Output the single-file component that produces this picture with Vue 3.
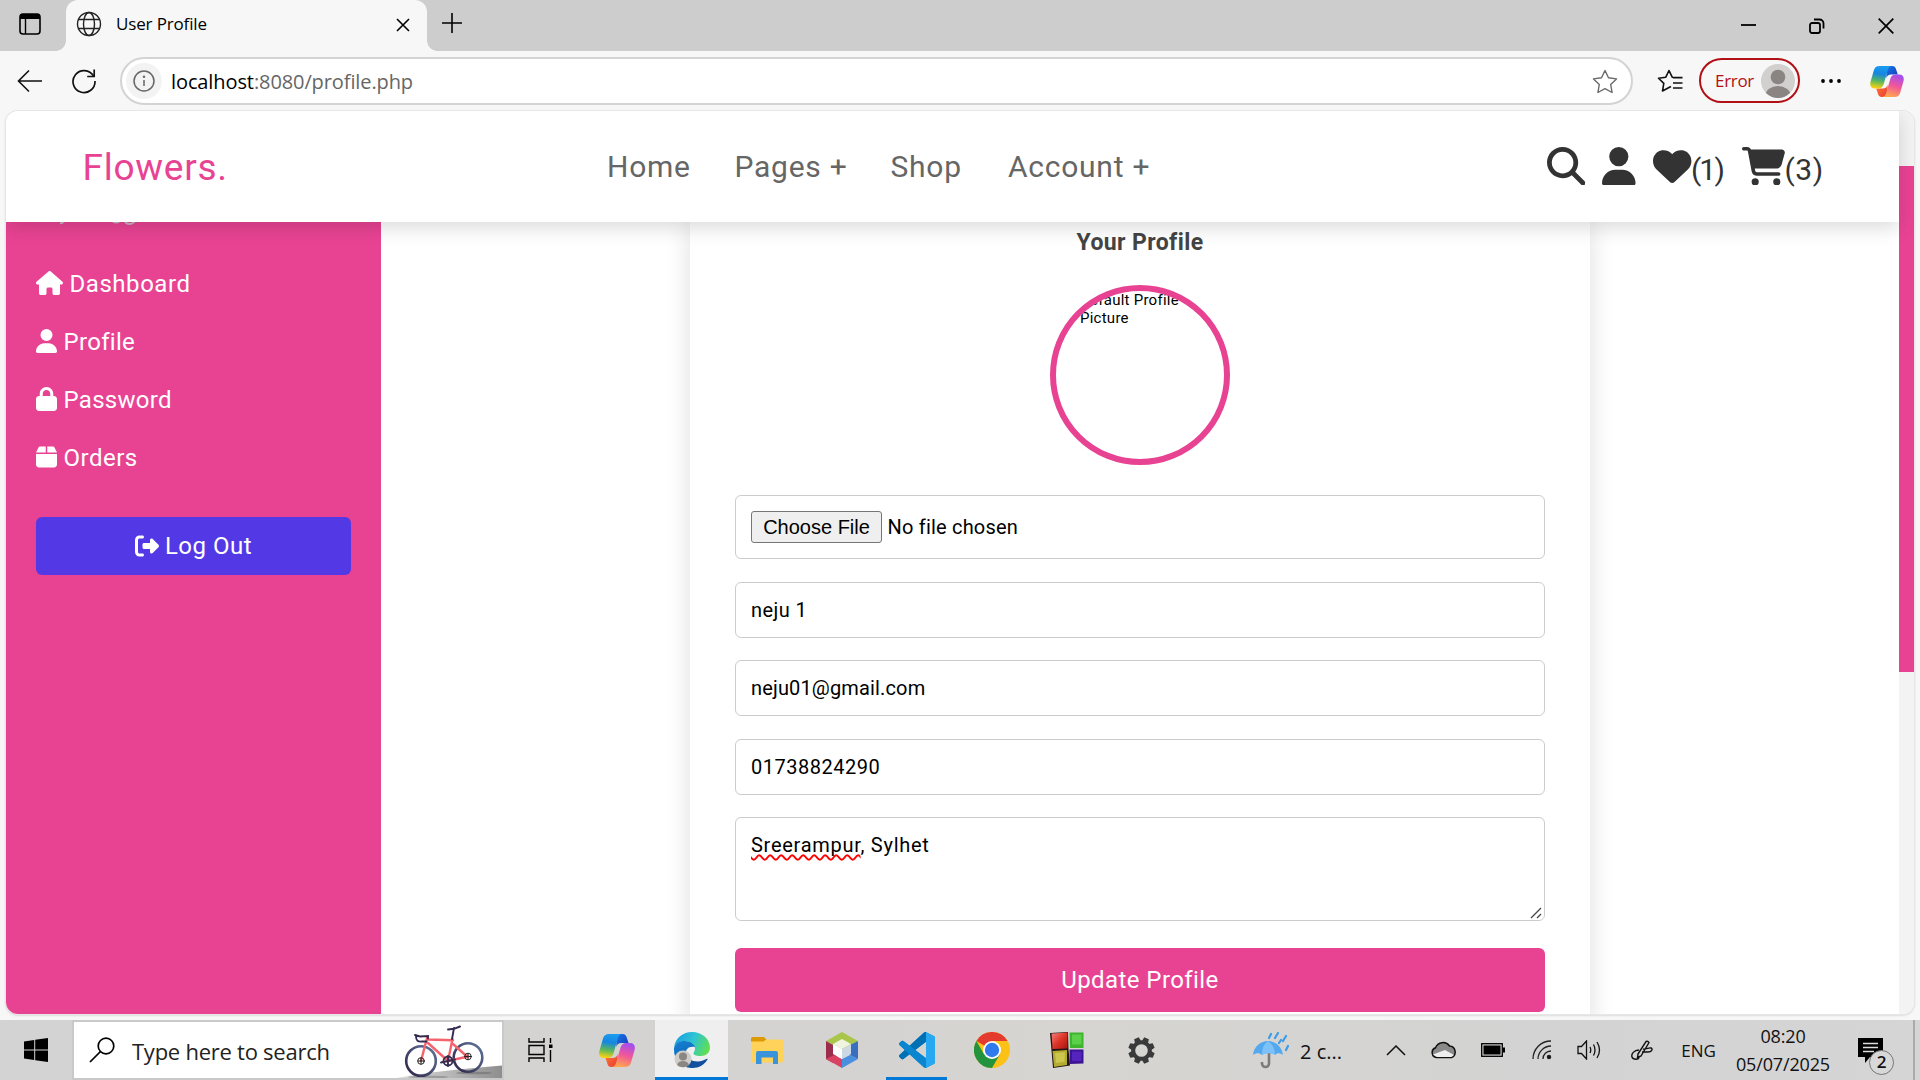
<script setup>
const glyphs = {
  search: { w: 512, d: 'M416 208c0 45.9-14.9 88.3-40 122.7L502.6 457.4c12.5 12.5 12.5 32.8 0 45.3s-32.8 12.5-45.3 0L330.7 376c-34.4 25.2-76.8 40-122.7 40C93.1 416 0 322.9 0 208S93.1 0 208 0S416 93.1 416 208zM208 352a144 144 0 1 0 0-288 144 144 0 1 0 0 288z' },
  user: { w: 448, d: 'M224 256A128 128 0 1 0 224 0a128 128 0 1 0 0 256zm-45.7 48C79.8 304 0 383.8 0 482.3C0 498.7 13.3 512 29.7 512H418.3c16.4 0 29.7-13.3 29.7-29.7C448 383.8 368.2 304 269.7 304H178.3z' },
  heart: { w: 512, d: 'M47.6 300.4L228.3 469.1c7.5 7 17.4 10.9 27.7 10.9s20.2-3.9 27.7-10.9L464.4 300.4c30.4-28.3 47.6-68 47.6-109.5v-5.8c0-69.9-50.5-129.5-119.4-141C347 36.5 300.6 51.4 268 84L256 96 244 84c-32.6-32.6-79-47.5-124.6-39.9C50.5 55.6 0 115.2 0 185.1v5.8c0 41.5 17.2 81.2 47.6 109.5z' },
  cart: { w: 576, d: 'M0 24C0 10.7 10.7 0 24 0H69.5c22 0 41.5 12.8 50.6 32h411c26.3 0 45.5 25 38.6 50.4l-41 152.3c-8.5 31.4-37 53.3-69.5 53.3H170.7l5.4 28.5c2.2 11.3 12.1 19.5 23.6 19.5H488c13.3 0 24 10.7 24 24s-10.7 24-24 24H199.7c-34.6 0-64.3-24.6-70.7-58.5L77.4 54.5c-.7-3.8-4-6.5-7.9-6.5H24C10.7 48 0 37.3 0 24zM128 464a48 48 0 1 1 96 0 48 48 0 1 1 -96 0zm336-48a48 48 0 1 1 0 96 48 48 0 1 1 0-96z' },
  house: { w: 576, d: 'M575.8 255.5c0 18-15 32.1-32 32.1h-32l.7 160.2c0 2.7-.2 5.4-.5 8.1V472c0 22.1-17.9 40-40 40H456c-1.1 0-2.2 0-3.3-.1c-1.4 .1-2.8 .1-4.2 .1H416 392c-22.1 0-40-17.9-40-40V448 384c0-17.7-14.3-32-32-32H256c-17.7 0-32 14.3-32 32v64 24c0 22.1-17.9 40-40 40H160 128.1c-1.5 0-3-.1-4.5-.2c-1.2 .1-2.4 .2-3.6 .2H104c-22.1 0-40-17.9-40-40V360c0-.9 0-1.9 .1-2.8V287.6H32c-18 0-32-14-32-32.1c0-9 3-17 10-24L266.4 8c7-7 15-8 22-8s15 2 21 7L564.8 231.5c8 7 12 15 11 24z' },
  lock: { w: 448, d: 'M144 144v48H304V144c0-44.2-35.8-80-80-80s-80 35.8-80 80zM80 192V144C80 64.5 144.5 0 224 0s144 64.5 144 144v48h16c35.3 0 64 28.7 64 64V448c0 35.3-28.7 64-64 64H64c-35.3 0-64-28.7-64-64V256c0-35.3 28.7-64 64-64H80z' },
  box: { w: 448, d: 'M50.7 58.5L0 160H208V32H93.7C75.5 32 58.9 42.3 50.7 58.5zM240 160H448L397.3 58.5C389.1 42.3 372.5 32 354.3 32H240V160zm208 32H0V416c0 35.3 28.7 64 64 64H384c35.3 0 64-28.7 64-64V192z' },
  logout: { w: 512, d: 'M377.9 105.9L500.7 228.7c7.2 7.2 11.3 17.1 11.3 27.3s-4.1 20.1-11.3 27.3L377.9 406.1c-6.4 6.4-15 9.9-24 9.9c-18.7 0-33.9-15.2-33.9-33.9l0-62.1-128 0c-17.7 0-32-14.3-32-32l0-64c0-17.7 14.3-32 32-32l128 0 0-62.1c0-18.7 15.2-33.9 33.9-33.9c9 0 17.6 3.6 24 9.9zM160 96L96 96c-17.7 0-32 14.3-32 32l0 256c0 17.7 14.3 32 32 32l64 0c17.7 0 32 14.3 32 32s-14.3 32-32 32l-64 0c-53 0-96-43-96-96L0 128C0 75 43 32 96 32l64 0c17.7 0 32 14.3 32 32s-14.3 32-32 32z' },
}
const menu = [
  { id: 'dashboard', icon: 'house', label: 'Dashboard' },
  { id: 'profile', icon: 'user', label: 'Profile' },
  { id: 'password', icon: 'lock', label: 'Password' },
  { id: 'orders', icon: 'box', label: 'Orders' },
]
const nav = ['Home', 'Pages +', 'Shop', 'Account +']
const fields = [
  { id: 'name', value: 'neju 1' },
  { id: 'email', value: 'neju01@gmail.com' },
  { id: 'phone', value: '01738824290' },
]
</script>

<template>
  <div class="screen">
    <svg class="defs" width="0" height="0">
      <defs>
        <linearGradient id="cpA" x1=".5" y1="0" x2=".35" y2="1"><stop offset="0" stop-color="#1b9cf0" /><stop offset=".35" stop-color="#1586e0" /><stop offset=".68" stop-color="#5cb85a" /><stop offset="1" stop-color="#ffd30f" /></linearGradient>
        <linearGradient id="cpB" x1=".7" y1="0" x2=".4" y2="1"><stop offset="0" stop-color="#a04ef2" /><stop offset=".5" stop-color="#f0569a" /><stop offset="1" stop-color="#ffa64d" /></linearGradient>
        <linearGradient id="cpC" x1="0" y1="0" x2="1" y2="1"><stop offset="0" stop-color="#1678e8" /><stop offset="1" stop-color="#1838b8" /></linearGradient>
        <linearGradient id="cpD" x1="0" y1="0" x2="1" y2="1"><stop offset="0" stop-color="#ff7a2c" /><stop offset="1" stop-color="#e8383c" /></linearGradient>
        <symbol id="copilot" viewBox="0 0 36 33">
          <path d="M18 0h5.500c2.600 0 3.500 1.300 4.200 3.600L29.500 9h-7c-3 0-4.500 1.500-5.300 4z" fill="url(#cpC)" />
          <path d="M18 33h-5.500c-2.600 0-3.500-1.300-4.200-3.600L6.500 24h7c3 0 4.500-1.500 5.300-4z" fill="url(#cpD)" />
          <path d="M10 0h13.200c-2.400 0-3.600 1.600-4.400 4.400L14.600 19c-1 3.400-2.600 5-6 5H5c-4 0-5.600-3-4.600-7L4 4.500C4.800 1.500 6.800 0 10 0z" fill="url(#cpA)" />
          <path d="M26 33H12.800c2.400 0 3.600-1.600 4.400-4.400L21.400 14c1-3.400 2.600-5 6-5H31c4 0 5.600 3 4.600 7L32 28.500c-.8 3-2.800 4.500-6 4.500z" fill="url(#cpB)" />
        </symbol>
        <linearGradient id="edA" x1="0" y1=".3" x2="1" y2=".6"><stop offset="0" stop-color="#1a9fe0" /><stop offset=".5" stop-color="#2ec4d4" /><stop offset="1" stop-color="#62e04c" /></linearGradient>
        <linearGradient id="edB" x1="0" y1="0" x2=".3" y2="1"><stop offset="0" stop-color="#1582d4" /><stop offset="1" stop-color="#0c5fb0" /></linearGradient>
        <linearGradient id="hill" x1="0" y1="0" x2="1" y2="0"><stop offset="0" stop-color="#e8e8e8" /><stop offset="1" stop-color="#8e8e8e" /></linearGradient>
        <linearGradient id="wheel" x1="0" y1="1" x2="1" y2="0"><stop offset="0" stop-color="#2c2346" /><stop offset="1" stop-color="#61759c" /></linearGradient>
        <linearGradient id="redTile" x1="0" y1="0" x2="1" y2="1"><stop offset="0" stop-color="#f4827a" /><stop offset=".5" stop-color="#dc3428" /><stop offset="1" stop-color="#a81410" /></linearGradient>
      </defs>
    </svg>

    <div class="tabstrip">
      <svg class="workspaces" width="22" height="22" viewBox="0 0 22 22"><rect x="1" y="1" width="20" height="20" rx="3" fill="none" stroke="#000" stroke-width="1.600" /><path d="M1 6V4a3 3 0 0 1 3-3h14a3 3 0 0 1 3 3v2z" fill="#000" /><path d="M6.500 6v15" stroke="#000" stroke-width="1.400" /></svg>
      <div class="tab">
        <svg width="26" height="26" viewBox="0 0 26 26" fill="none" stroke="#222" stroke-width="1.400"><circle cx="13" cy="13" r="11.500" /><ellipse cx="13" cy="13" rx="5.500" ry="11.500" /><path d="M2.500 8.500h21M2.500 17.500h21" /></svg>
        <span class="tab-title">User Profile</span>
        <svg class="tab-close" width="14" height="14" viewBox="0 0 14 14" stroke="#000" stroke-width="1.600"><path d="M1 1l12 12M13 1L1 13" /></svg>
      </div>
      <svg class="new-tab" width="22" height="22" viewBox="0 0 22 22" stroke="#000" stroke-width="1.600"><path d="M11 1v20M1 11h20" /></svg>
      <div class="win-controls">
        <svg width="15" height="15" viewBox="0 0 15 15"><path d="M0 7h15" stroke="#000" stroke-width="1.800" /></svg>
        <svg width="16" height="16" viewBox="0 0 16 16" fill="none" stroke="#000" stroke-width="1.800"><rect x="1" y="5" width="10" height="10" rx="2" /><path d="M5 1.500h5.500a4 4 0 0 1 4 4v5" /></svg>
        <svg width="16" height="16" viewBox="0 0 16 16" stroke="#000" stroke-width="1.700"><path d="M.7.700l14.600 14.600M15.300.7L.7 15.300" /></svg>
      </div>
    </div>

    <div class="toolbar">
      <svg class="back" width="26" height="24" viewBox="0 0 26 24" fill="none" stroke="#111" stroke-width="1.600"><path d="M25 12H1.500M12 1.500L1.500 12 12 22.500" /></svg>
      <svg class="reload" width="26" height="26" viewBox="0 0 26 26" fill="none" stroke="#111" stroke-width="1.700"><path d="M22.500 8A11 11 0 1 0 24 13" /><path d="M23.200 1.500v7h-7" /></svg>
      <div class="address">
        <span class="site-info"><svg width="22" height="22" viewBox="0 0 22 22" fill="none" stroke="#666" stroke-width="1.500"><circle cx="11" cy="11" r="10" /><path d="M11 10v6" /><circle cx="11" cy="6.700" r=".5" /></svg></span>
        <span class="url"><b>localhost</b>:8080/profile.php</span>
        <svg class="star" width="26" height="25" viewBox="0 0 26 25" fill="none" stroke="#6a6a6a" stroke-width="1.400" stroke-linejoin="round"><path d="M13 1.500l3.500 7.300 8 1.100-5.800 5.600 1.400 8L13 19.700l-7.100 3.800 1.400-8L1.500 9.900l8-1.100z" /></svg>
      </div>
      <svg class="favs" width="26" height="25" viewBox="0 0 26 25" fill="none" stroke="#111" stroke-width="1.600" stroke-linejoin="round"><path d="M18 8.600l-2.800-.4L12 1.500 8.800 8.200l-7.300 1 5.300 5.200L5.500 22l6.500-3.500 2-1M16 8.600h9.500M16 14h9.500M16 19h9.500" /></svg>
      <div class="account"><span>Error</span><svg width="34" height="34" viewBox="0 0 34 34"><defs><clipPath id="av"><circle cx="17" cy="17" r="17" /></clipPath></defs><circle cx="17" cy="17" r="17" fill="#d2d0ce" /><g fill="#8a8583" clip-path="url(#av)"><circle cx="17" cy="13" r="7.300" /><ellipse cx="17" cy="31" rx="12.500" ry="9" /></g></svg></div>
      <svg class="dots" width="22" height="6" viewBox="0 0 22 6"><circle cx="3" cy="3" r="1.900" /><circle cx="11" cy="3" r="1.900" /><circle cx="19" cy="3" r="1.900" /></svg>
      <svg class="copilot" width="34" height="31"><use href="#copilot" /></svg>
    </div>

    <div class="viewport">
      <div class="page">
        <header class="header">
          <span class="logo">Flowers.</span>
          <nav class="nav"><span v-for="n in nav" :key="n">{{ n }}</span></nav>
          <div class="actions">
            <svg width="38.400" height="38.400" viewBox="0 0 512 512"><path :d="glyphs.search.d" /></svg>
            <svg class="act-user" width="33.600" height="38.400" viewBox="0 0 448 512"><path :d="glyphs.user.d" /></svg>
            <svg class="act-heart" width="38.400" height="38.400" viewBox="0 0 512 512"><path :d="glyphs.heart.d" /></svg>
            <span class="count one">(1)</span>
            <svg width="43.200" height="38.400" viewBox="0 0 576 512"><path :d="glyphs.cart.d" /></svg>
            <span class="count">(3)</span>
          </div>
        </header>
        <div class="body">
          <aside class="sidebar">
            <svg class="cutoff" width="90" height="4" viewBox="0 0 90 4" fill="none" stroke="#c4b4bc" stroke-width="2"><path d="M18 1.300q2.500 0 4-2M71-.5q3 2.200 6.500 0M83 0q4 4 9.500 0" /></svg>
            <a v-for="m in menu" :key="m.id" class="link" :class="m.id">
              <svg :width="glyphs[m.icon].w / 512 * 24" height="24" :viewBox="`0 0 ${glyphs[m.icon].w} 512`"><path :d="glyphs[m.icon].d" /></svg>
              <span>{{ m.label }}</span>
            </a>
            <a class="logout"><svg width="24" height="24" viewBox="0 0 512 512"><path :d="glyphs.logout.d" /></svg><span>Log Out</span></a>
          </aside>
          <main class="main">
            <section class="card">
              <h2>Your Profile</h2>
              <div class="photo">Default Profile<br>Picture</div>
              <div class="field file"><span class="choose">Choose File</span><span class="nofile">No file chosen</span></div>
              <div v-for="f in fields" :key="f.id" class="field" :class="f.id">{{ f.value }}</div>
              <div class="field address-box"><span><span class="misspelt">Sreerampur</span>, Sylhet</span>
                <svg class="grip" width="12" height="12" viewBox="0 0 12 12" stroke="#444" stroke-width="1.300"><path d="M1 11L11 1M7 11l4-4" /></svg>
              </div>
              <div class="update">Update Profile</div>
            </section>
          </main>
        </div>
      </div>
      <div class="scrollbar"><div class="thumb"></div></div>
    </div>

    <div class="taskbar">
      <div class="start"><svg width="24" height="24" viewBox="0 0 24 24"><path d="M0 3.400l10.200-1.400v9.500H0zM11.200 1.800L24 0v11.500H11.200zM0 12.500h10.200V22L0 20.600zM11.200 12.500H24V24l-12.800-1.800z" /></svg></div>
      <div class="search">
        <svg width="26" height="26" viewBox="0 0 26 26" fill="none" stroke="#000" stroke-width="1.700"><circle cx="17" cy="9" r="7.800" /><path d="M11.500 14.500L1 25" /></svg>
        <span>Type here to search</span>
        <svg class="bike" width="112" height="56" viewBox="0 2 112 56" fill="none" stroke-linecap="round">
          <path d="M-4 60C30 53 70 49 112 45.500V60z" fill="url(#hill)" />
          <ellipse cx="38" cy="57" rx="20" ry="1.500" fill="#777" opacity=".5" />
          <ellipse cx="84" cy="53" rx="18" ry="1.300" fill="#666" opacity=".5" />
          <circle cx="31" cy="41" r="14.800" stroke="url(#wheel)" stroke-width="2.600" />
          <circle cx="78" cy="37.500" r="14.300" stroke="url(#wheel)" stroke-width="2.600" />
          <g stroke="#f5636d" stroke-width="2.400"><path d="M37 18l-6 23M38 19.500l25 .8M38 23l20 18M62.500 19L58 41l20-4.500M63 24l14 12.500" /></g>
          <g stroke="#352b50" stroke-width="1.900"><path d="M62 19l2-11M58 9.500l6-.7 6-2.300M38 18.500V16l-8 .5-5-1.500M26 16c0 5 2 6 6 5.500h4.500" /><circle cx="58" cy="41" r="4.500" /><path d="M51 42.500l14-3M58 36v10" /></g>
          <g stroke="#222" stroke-width="1"><circle cx="31" cy="41" r="3.300" /><path d="M31 38v6M28 41h6" /><circle cx="78" cy="36.500" r="3.300" /><path d="M78 33.500v6M75 36.500h6" /></g>
        </svg>
      </div>
      <div class="slot taskview"><svg width="25" height="24" viewBox="0 0 25 24" fill="none" stroke="#000" stroke-width="1.400"><path d="M1 0v4h15V0M1 24v-4h15v4M1 7.500h15v9H1zM22.500 0v5M22.500 12v12" /><path d="M21 6.500h3.500v3.500H21z" fill="#000" stroke="none" /></svg></div>
      <div class="slot"><svg width="36" height="33"><use href="#copilot" /></svg></div>
      <div class="slot"><div class="active">
        <svg width="36" height="36" viewBox="0 0 36 36">
          <path d="M0 16C1 6 9 0 18 0c10 0 18 7 18 15.500 0 5-4 8.500-9.500 8.500-5 0-7.500-1.600-7-3 .8-1.500 1.500-2.500 1.500-4.500C21 12 16 9 10 9 5.500 9 1.500 12 0 16z" fill="url(#edA)" />
          <path d="M0 16C1.500 11 6 8.500 11 9c5 .3 9 2.500 10 6-7-1.500-10 3-9 8 1 5 5 9 10 9.500L19 36C8 36.500 0 28 0 18z" fill="url(#edB)" />
          <path d="M12 21c1 5 5.500 8.500 11.500 8.500 4 0 7.500-1.800 9.300-2.800.5-.2 1 .3.700.8C30.500 32.500 25 36 18.500 36 12 35 8.500 27 12 21z" fill="#124f9e" />
          <circle cx="9" cy="27" r="8.500" fill="#cfcdca" /><circle cx="9" cy="24.500" r="4" fill="#8c8682" /><path d="M3 33c1-3 3-4 6-4s5 1 6 4c-3.500 3-8.500 3-12 0z" fill="#8c8682" />
        </svg></div></div>
      <div class="slot"><svg width="32" height="27" viewBox="0 0 32 27"><path d="M0 1.500A1.500 1.500 0 0 1 1.500 0H13l2.500 2.500L13 5H0z" fill="#dd9a04" /><path d="M0 4.500h12.500L15 2.500h15.500A1.500 1.500 0 0 1 32 4v20a1.500 1.500 0 0 1-1.500 1.500h-29A1.500 1.500 0 0 1 0 24z" fill="#ffd25a" /><path d="M5 27V16a2 2 0 0 1 2-2h18a2 2 0 0 1 2 2v11h-5v-6.500H10.500V27z" fill="#3b93dc" /></svg></div>
      <div class="slot"><svg width="32" height="36" viewBox="0 0 32 36"><path d="M16 0l16 9-16 9L0 9z" fill="#a9c64a" /><path d="M0 9l16 9-9 13L0 27z" fill="#9a2d4c" /><path d="M0 27l8-4 8 4v9z" fill="#da4263" /><path d="M32 27l-8-4-8 4v9z" fill="#4a8fe0" /><path d="M32 9l-8 4v10l8 4z" fill="#3a6fc0" /><path d="M16 7l9 5-9 5-9-5z" fill="#f0f3e0" /><path d="M7 12l9 5v10l-9-5z" fill="#fff" /><path d="M25 12l-9 5v10l9-5z" fill="#ccd8e4" /></svg></div>
      <div class="slot running"><svg width="36" height="36" viewBox="0 0 24 24"><path d="M23.150 2.587L18.210.210a1.494 1.494 0 0 0-1.705.290l-9.460 8.630-4.120-3.128a.999.999 0 0 0-1.276.057L.327 7.261A1 1 0 0 0 .326 8.740L3.899 12 .326 15.260a1 1 0 0 0 .001 1.479L1.650 17.940a.999.999 0 0 0 1.276.057l4.120-3.128 9.460 8.630a1.492 1.492 0 0 0 1.704.290l4.942-2.377A1.500 1.500 0 0 0 24 20.060V3.939a1.500 1.500 0 0 0-.850-1.352zm-5.146 14.861L10.826 12l7.178-5.448v10.896z" fill="#0a86d0" /><path d="M7.045 9.130L3.900 12 .326 15.260a1 1 0 0 0 .001 1.479L1.650 17.940a1 1 0 0 0 1.276.057L10.826 12 18.004 6.552V.120a1.500 1.500 0 0 0-1.500.380z" fill="#0070b5" /><path d="M.327 7.261A1 1 0 0 0 .326 8.740L16.500 23.500l1.504-.5v-5.552L2.925 6.002a1 1 0 0 0-1.276.057z" fill="#0a86d0" /><path d="M18 .150l5.150 2.437A1.500 1.500 0 0 1 24 3.939V20.060a1.500 1.500 0 0 1-.850 1.352L18 23.850z" fill="#28a8f0" /></svg></div>
      <div class="slot"><svg width="36" height="36" viewBox="0 0 36 36"><circle cx="18" cy="18" r="18" fill="#fbc116" /><path d="M18 18L2.400 9A18 18 0 0 1 33.600 9H18z" fill="#e33b2e" /><path d="M2.400 9A18 18 0 0 0 18 36l7.800-13.500L18 18l-7.800 4.500z" fill="#24933f" /><circle cx="18" cy="18" r="9" fill="#fff" /><circle cx="18" cy="18" r="7.200" fill="#2f7bed" /></svg></div>
      <div class="slot"><svg width="34" height="36" viewBox="0 0 34 36"><path d="M0 1l18-1 .5 17.500 1.500 16L3 36z" fill="#201414" /><path d="M1.500 1.500L17.500.500v16L2.500 17z" fill="url(#redTile)" /><path d="M19.500.500H33.500v15.500h-13.500z" fill="#3fb42e" /><path d="M22 2.500h9.500v10H22z" fill="#5cd048" /><path d="M2.500 19l14.500-1v15L4 35z" fill="#b4ac30" /><path d="M5 21l10-.8-.5 9.500L6 31z" fill="#cdc64c" /><path d="M19.500 17.500h14V31.500l-14 .5z" fill="#3c1494" /><path d="M22 19.500h9.500V29H22z" fill="#5424bc" /></svg></div>
      <div class="slot"><svg width="27" height="27" viewBox="0 0 27 27"><circle cx="13.500" cy="13.500" r="8.300" fill="none" stroke="#3a3a3a" stroke-width="4" /><g fill="#3a3a3a"><path v-for="a in [22.5, 67.5, 112.5, 157.5, 202.5, 247.5, 292.5, 337.5]" :key="a" d="M11 .3h5l.8 4.500h-6.600z" :transform="`rotate(${a} 13.500 13.500)`" /></g></svg></div>

      <div class="tray">
        <svg class="umbrella" width="36" height="37" viewBox="0 0 36 37"><path d="M16 9v22.500a3.500 3.500 0 0 1-7 0V30" fill="none" stroke="#7d7a7c" stroke-width="2.600" /><path d="M0 23C1 14 8 9 15 9s14 5 15 14c-3-2.500-6-2.500-8 0-2.500-2.500-10-2.500-13 0-2.500-2.500-6-2.500-9 0z" fill="#54a8ee" /><path d="M9 23c0-7 2-11 6-14 4 3 7 7 7 14-2.500-2.500-10-2.500-13 0z" fill="#7cc2f8" /><path d="M18 2l-2 4M25 1l-3 5M33 4l-3 5M28 8l-2 3M35 14l-2 4" stroke="#3d9be8" stroke-width="2.200" stroke-linecap="round" /></svg>
        <span class="weather">2 c...</span>
        <svg width="20" height="11" viewBox="0 0 20 11" fill="none" stroke="#111" stroke-width="1.500"><path d="M1 10l9-9 9 9" /></svg>
        <svg width="26" height="18" viewBox="0 0 26 18"><path d="M6 16.500a5 5 0 0 1-1.500-9.700A8 8 0 0 1 18.500 5a6 6 0 0 1 2 11.500z" fill="#8a8a8a" stroke="#111" stroke-width="1.500" /><path d="M2 13.500L14 9l9 5-2.500 2H6z" fill="#eee" /></svg>
        <svg width="24" height="14" viewBox="0 0 24 14"><rect x=".7" y=".7" width="20.600" height="12.600" fill="none" stroke="#000" stroke-width="1.300" /><path d="M2.500 2.500h17v9h-17zM22 4.500h2v5h-2z" /></svg>
        <svg width="20" height="20" viewBox="0 0 20 20" fill="none" stroke="#222" stroke-width="1.300"><path d="M1 19C1 9 9 1 19 1M6 19C6 12 12 6 19 6M11 19c0-4.500 3.500-8 8-8" /><circle cx="17" cy="17" r="1.600" fill="#111" /></svg>
        <svg width="24" height="20" viewBox="0 0 24 20" fill="none" stroke="#111" stroke-width="1.300"><path d="M1 6.500h3.500L9.500 1v18l-5-5.500H1zM13 7q1.500 3 0 6M16.500 4.500q3 5.500 0 11M20 2q5 8 0 16" /></svg>
        <svg width="22" height="21" viewBox="0 0 22 21" fill="none" stroke="#111" stroke-width="1.400"><path d="M7 14L15 1.500q2-.8 3 1L10 16l-3.500 1.500zM12 9c3 1 6-2 8-1s1 4-3 4-6 0-6 0M8 10c-5 0-8 4-7 7s7 3 7 0" /></svg>
        <span class="lang">ENG</span>
        <div class="clock"><span>08:20</span><span class="date">05/07/2025</span></div>
        <div class="notif"><svg width="25" height="25" viewBox="0 0 25 25"><path d="M0 0h25v19H12l-5 6v-6H0z" /><path d="M5 5.500h15M5 9.500h15M5 13.500h11" stroke="#ddd" stroke-width="1.400" /></svg><span class="badge">2</span></div>
        <i class="peek"></i>
      </div>
    </div>
  </div>
</template>

<style>
body { margin: 0; overflow: hidden; }
</style>
<style scoped>
* { box-sizing: border-box; }
svg { display: block; flex: none; }
.screen { width: 1920px; height: 1080px; display: flex; flex-direction: column; background: #f7f7f7; font-family: "Open Sans", "Noto Sans", sans-serif; color: #000; overflow: hidden; white-space: nowrap; }
.defs { position: absolute; }

.tabstrip { height: 51px; flex: none; background: #cdcdcd; display: flex; }
.workspaces { margin: 13px 0 0 19px; }
.tab { position: relative; width: 361px; margin-left: 25px; height: 51px; background: #f7f7f7; border-radius: 12px 12px 0 0; display: flex; align-items: center; padding: 0 17px 3px 10px; }
.tab::before, .tab::after { content: ""; position: absolute; bottom: 0; width: 10px; height: 10px; }
.tab::before { left: -10px; background: radial-gradient(circle at 0 0, #cdcdcd 9.500px, #f7f7f7 10px); }
.tab::after { right: -10px; background: radial-gradient(circle at 100% 0, #cdcdcd 9.500px, #f7f7f7 10px); }
.tab-title { margin-left: 14px; padding-bottom: 2px; font-size: 17px; letter-spacing: -.15px; }
.tab-close { margin-left: auto; margin-top: 1px; }
.new-tab { margin: 12px 0 0 14px; }
.win-controls { margin-left: auto; display: flex; gap: 53px; padding: 18px 26px 0 0; }

.toolbar { height: 60px; flex: none; display: flex; align-items: center; }
.back { margin-left: 17px; }
.reload { margin-left: 28px; }
.address { width: 1513px; height: 48px; margin-left: 23px; background: #fff; border: 2px solid #d3d3d3; border-radius: 24px; display: flex; align-items: center; padding: 0 13px 0 4px; }
.site-info { width: 36px; height: 36px; border-radius: 50%; background: #f3f3f3; display: flex; align-items: center; justify-content: center; }
.url { margin-left: 9px; font-size: 20px; letter-spacing: -.1px; color: #666; }
.url b { font-weight: 400; color: #000; }
.star { margin-left: auto; }
.favs { margin-left: 24px; }
.account { width: 101px; height: 45px; margin-left: 16px; margin-bottom: 1px; border: 2px solid #b11116; border-radius: 23px; display: flex; align-items: center; justify-content: space-between; padding: 0 3px 0 14px; color: #b11116; font-size: 17px; letter-spacing: -.3px; }
.account span { margin-top: -1px; }
.dots { margin-left: 20px; }
.copilot { margin-left: 28px; }

.viewport { width: 1908px; height: 903px; flex: none; margin-left: 6px; display: flex; border-radius: 12px; overflow: hidden; background: #fff; box-shadow: 0 0 0 1px #e6e6e6, 0 1px 2px 1px #dcdcdc; font-family: Roboto, sans-serif; }
.page { width: 1893px; display: flex; flex-direction: column; }
.header { position: relative; z-index: 2; height: 111px; flex: none; background: #fff; box-shadow: 0 6px 18px rgba(0, 0, 0, .14); display: flex; align-items: center; }
.logo { width: 519px; margin-left: 76.500px; padding-top: 2px; font-size: 37px; letter-spacing: .75px; color: #e84393; }
.nav { width: 945px; display: grid; grid-template-columns: 127.500px 156px 117.500px 1fr; font-size: 30px; letter-spacing: .75px; color: #666; padding-left: 5.500px; }
.actions { display: flex; align-items: center; fill: #333; }
.actions svg { margin-top: -1px; }
.act-user { margin-left: 17.500px; }
.act-heart { margin-left: 17.500px; }
.count { font-size: 30px; letter-spacing: .5px; color: #333; padding-top: 5px; width: 39px; margin-left: -1px; }
.count.one { letter-spacing: -1.800px; width: 51.500px; }

.body { flex: 1; display: flex; min-height: 0; }
.sidebar { width: 375px; background: #e84393; padding: 0 30px; color: #fff; fill: #fff; font-size: 24px; display: flex; flex-direction: column; letter-spacing: .3px; }
.cutoff { margin: 0 0 28px 6px; height: 4px; overflow: visible; clip-path: inset(0 -10px 0 0); }
.link { display: flex; align-items: center; height: 58px; }
.link span { margin-left: 6.500px; padding-top: 1px; }
.dashboard span { letter-spacing: .55px; }
.orders span { letter-spacing: .5px; }
.logout { height: 58px; margin-top: 31px; background: #5339e6; border-radius: 6px; display: flex; align-items: center; justify-content: center; gap: 6px; letter-spacing: .5px; }

.main { width: 1518px; padding-left: 309px; }
.card { width: 900px; height: 900px; padding: 0 45px; background: #fff; box-shadow: 0 0 24px rgba(0, 0, 0, .13); display: flex; flex-direction: column; }
h2 { margin: 7px 0 0; height: 27px; line-height: 27px; text-align: center; font-size: 23px; font-weight: 700; letter-spacing: .4px; color: #444; }
.photo { width: 180px; height: 180px; margin: 29px auto 0; border: 6px solid #e84393; border-radius: 50%; overflow: hidden; font-size: 15px; line-height: 18px; letter-spacing: .25px; padding-left: 24px; }
.field { height: 56px; flex: none; margin-top: 22.400px; border: 1px solid #ccc; border-radius: 6px; padding: 0 15px; font-size: 20px; display: flex; align-items: center; }
.file { height: 64.400px; margin-top: 30px; letter-spacing: .2px; }
.choose { width: 131px; height: 32px; border: 1px solid #767676; border-radius: 3px; background: #efefef; font: 20px/30px "Liberation Sans", Arial, sans-serif; letter-spacing: 0; text-align: center; margin-right: 5.500px; }
.name { letter-spacing: .4px; }
.email { letter-spacing: .15px; }
.phone { letter-spacing: .52px; }
.address-box { position: relative; height: 104px; align-items: flex-start; padding-top: 15px; line-height: 24px; letter-spacing: .72px; }
.misspelt { text-decoration: underline wavy #f00 1.500px; text-decoration-skip-ink: none; text-underline-offset: 2px; }
.grip { position: absolute; right: 2px; bottom: 1px; }
.update { height: 64px; flex: none; margin-top: 27px; border-radius: 6px; background: #e84393; color: #fff; font-size: 24px; line-height: 64px; letter-spacing: .42px; text-align: center; }
.scrollbar { width: 15px; background: #f3f3f3; padding-top: 55px; }
.thumb { height: 506px; background: #e84393; }

.taskbar { height: 60px; flex: none; margin-top: 6px; background: linear-gradient(90deg, #d3d3d3, #d4d3d1 45%, #d6d5d1 55%, #d3d3d3 80%, #d5d5d5); display: flex; }
.start { width: 74px; display: flex; align-items: center; padding-left: 24px; }
.search { width: 428px; height: 56px; margin-top: 2px; background: #fff; box-shadow: 0 0 0 2px #c9c9c9; display: flex; align-items: center; padding-left: 15px; font-size: 22px; letter-spacing: -.25px; color: #222; }
.search span { margin-left: 17px; padding-top: 1px; }
.bike { margin-left: auto; }
.slot { width: 75px; display: flex; align-items: center; justify-content: center; }
.taskview { width: 77px; padding-right: 1px; }
.active { width: 73px; height: 60px; background: #efefef; border-bottom: 3px solid #0078d7; padding-top: 3px; display: flex; align-items: center; justify-content: center; }
.running { background: linear-gradient(#0078d7, #0078d7) center bottom / 61px 3px no-repeat; }
.tray { flex: 1; display: grid; grid-template-columns: 36px 83px 48px 48px 49px 49px 46px 60px 53px 116px 72px 1fr; padding-left: 74px; align-items: center; justify-items: center; font-size: 18px; color: #111; }
.weather { justify-self: start; padding-left: 11px; font-size: 20px; padding-top: 3px; }
.lang { font-size: 17px; }
.clock { display: flex; flex-direction: column; align-items: center; line-height: 28px; letter-spacing: -.15px; }
.notif { position: relative; justify-self: start; margin-left: 17px; }
.badge { position: absolute; left: 11px; top: 12px; width: 25px; height: 25px; border-radius: 50%; border: 1.500px solid #777; background: #d8d8d8; font-size: 17px; line-height: 21px; text-align: center; font-weight: 600; }
.peek { justify-self: start; width: 2px; height: 60px; background: #aaa; }
</style>
